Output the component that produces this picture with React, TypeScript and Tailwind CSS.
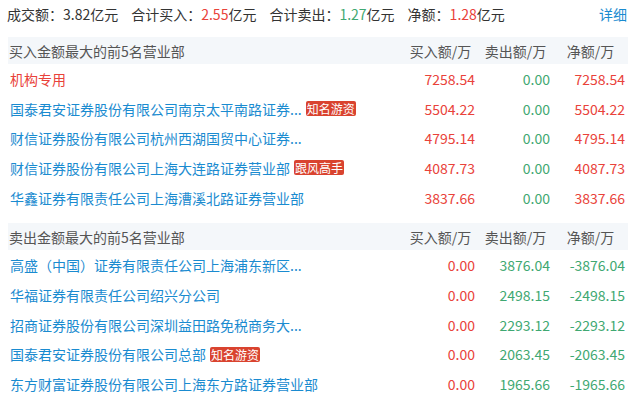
import React from "react";

type Row = { name: string; tag?: string; buy: string; sell: string; net: string; nameRed?: boolean };

const buyRows: Row[] = [
  { name: "机构专用", buy: "7258.54", sell: "0.00", net: "7258.54", nameRed: true },
  { name: "国泰君安证券股份有限公司南京太平南路证券...", tag: "知名游资", buy: "5504.22", sell: "0.00", net: "5504.22" },
  { name: "财信证券股份有限公司杭州西湖国贸中心证券...", buy: "4795.14", sell: "0.00", net: "4795.14" },
  { name: "财信证券股份有限公司上海大连路证券营业部", tag: "跟风高手", buy: "4087.73", sell: "0.00", net: "4087.73" },
  { name: "华鑫证券有限责任公司上海漕溪北路证券营业部", buy: "3837.66", sell: "0.00", net: "3837.66" },
];

const sellRows: Row[] = [
  { name: "高盛（中国）证券有限责任公司上海浦东新区...", buy: "0.00", sell: "3876.04", net: "-3876.04" },
  { name: "华福证券有限责任公司绍兴分公司", buy: "0.00", sell: "2498.15", net: "-2498.15" },
  { name: "招商证券股份有限公司深圳益田路免税商务大...", buy: "0.00", sell: "2293.12", net: "-2293.12" },
  { name: "国泰君安证券股份有限公司总部", tag: "知名游资", buy: "0.00", sell: "2063.45", net: "-2063.45" },
  { name: "东方财富证券股份有限公司上海东方路证券营业部", buy: "0.00", sell: "1965.66", net: "-1965.66" },
];

const RED = "text-[#e9423a]";
const GREEN = "text-[#3fa872]";

function Section({ title, rows, buySide }: { title: string; rows: Row[]; buySide: boolean }) {
  return (
    <div>
      <div className="flex h-[27px] items-center bg-[#f4f7fa] text-[#555555]">
        <div className="flex-1 pl-[1px]">{title}</div>
        <div className="w-[75px] text-center">买入额/万</div>
        <div className="w-[75px] text-center">卖出额/万</div>
        <div className="w-[75px] text-center">净额/万</div>
      </div>
      {rows.map((r, i) => (
        <div key={i} className="flex h-[29.7px] items-center">
          <div className="flex flex-1 items-center pl-[2px]">
            <span className={r.nameRed ? "text-[#e9423a]" : "text-[#1a8bd0]"}>{r.name}</span>
            {r.tag && (
              <span className="ml-[4px] flex h-[15px] items-center rounded-[2px] bg-[#d9432f] px-[1px] text-[12px] leading-[15px] text-white">
                {r.tag}
              </span>
            )}
          </div>
          <div className={`w-[75px] pr-[3px] text-right ${RED}`}>{r.buy}</div>
          <div className={`w-[75px] pr-[3px] text-right ${GREEN}`}>{r.sell}</div>
          <div className={`w-[75px] pr-[3px] text-right ${buySide ? RED : GREEN}`}>{r.net}</div>
        </div>
      ))}
    </div>
  );
}

export default function App() {
  return (
    <div
      className="h-[398px] w-[641px] bg-white text-[14px] leading-none text-[#333333]"
      style={{ fontFamily: '"Microsoft YaHei", "Noto Sans CJK SC", "Noto Sans", sans-serif' }}
    >
      <div className="flex h-[27px] items-center pl-[7px] pr-[14px]">
        <div className="flex gap-[13px]">
          <span>
            成交额：<span className="text-[#333333]">3.82</span>亿元
          </span>
          <span>
            合计买入：<span className={RED}>2.55</span>亿元
          </span>
          <span>
            合计卖出：<span className={GREEN}>1.27</span>亿元
          </span>
          <span>
            净额：<span className={RED}>1.28</span>亿元
          </span>
        </div>
        <span className="ml-auto text-[#1a8bd0]">详细</span>
      </div>
      <div className="mt-[10px] pl-[8px] pr-[13px]">
        <Section title="买入金额最大的前5名营业部" rows={buyRows} buySide={true} />
        <div className="h-[11px]" />
        <Section title="卖出金额最大的前5名营业部" rows={sellRows} buySide={false} />
      </div>
    </div>
  );
}
